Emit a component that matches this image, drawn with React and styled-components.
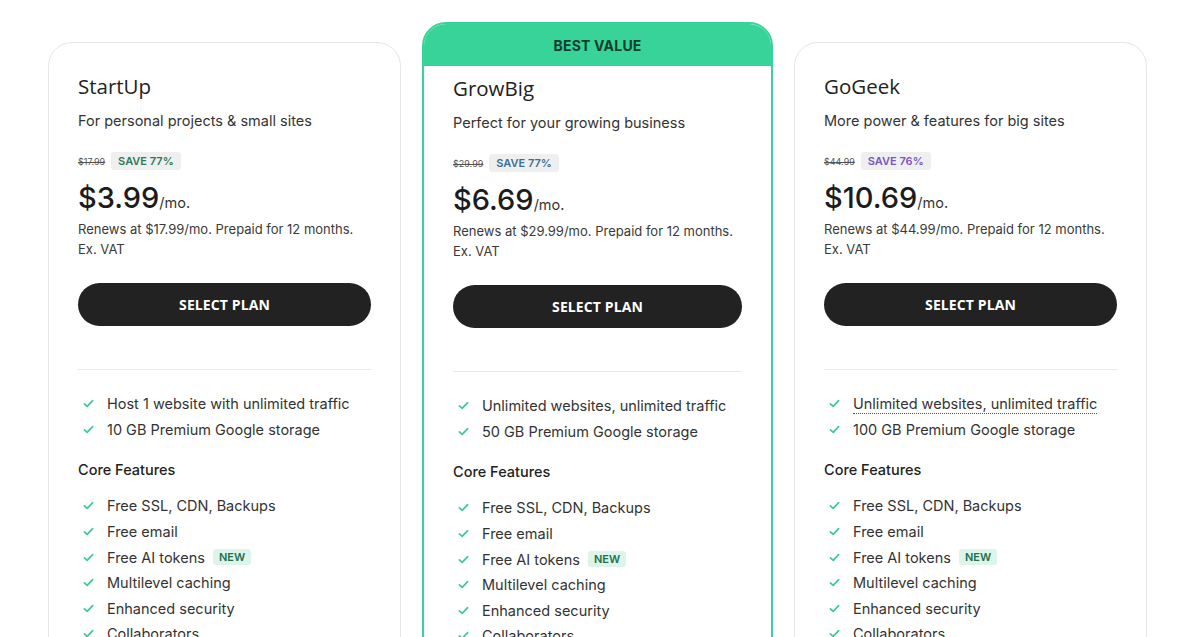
import React from "react";
import styled, { createGlobalStyle } from "styled-components";

const Global = createGlobalStyle`
  html, body { margin: 0; padding: 0; background: #fff; }
  body { font-family: Inter, "Noto Sans", sans-serif; color: #2b2b2b; -webkit-font-smoothing: antialiased; }
`;

const Page = styled.div`
  padding: 22px 0 0 48px;
  height: 615px;
  overflow: hidden;
`;

const Grid = styled.div`
  display: grid;
  grid-template-columns: 353px 351px 353px;
  column-gap: 21px;
  align-items: start;
`;

const Card = styled.div`
  margin-top: ${(p) => (p.$featured ? 0 : 20)}px;
  border: ${(p) => (p.$featured ? "2px solid #37d399" : "1px solid #e6e6e6")};
  border-radius: 24px;
  background: #fff;
  overflow: hidden;
`;

const Ribbon = styled.div`
  height: 42px;
  background: #37d399;
  display: flex;
  align-items: center;
  justify-content: center;
  font-size: 14px;
  font-weight: 700;
  color: #153d2c;
  letter-spacing: 0.2px;
`;

const Body = styled.div`
  padding: ${(p) => (p.$featured ? "8px 29px 40px" : "29px 29px 40px")};
`;

const Title = styled.h2`
  margin: 0;
  font-family: "Open Sans", Inter, sans-serif;
  font-size: 20.5px;
  line-height: 28px;
  font-weight: 500;
  color: #222;
`;

const Subtitle = styled.p`
  margin: 10px 0 0;
  font-size: 14.5px;
  line-height: 22px;
  color: #333;
`;

const SaveRow = styled.div`
  margin-top: 20px;
  display: flex;
  align-items: center;
  gap: 6px;
  height: 18px;
`;

const OldPrice = styled.span`
  font-size: 9px;
  color: #555;
  text-decoration: line-through;
`;

const SaveBadge = styled.span`
  background: #efefef;
  border-radius: 3px;
  padding: 2px 7px;
  font-size: 11px;
  line-height: 14px;
  font-weight: 600;
  color: ${(p) => p.$color};
`;

const PriceRow = styled.div`
  margin-top: 12px;
  display: flex;
  align-items: baseline;
  line-height: 32px;
`;

const Price = styled.span`
  font-size: 29px;
  font-weight: 500;
  color: #1c1c1c;
  letter-spacing: 0;
`;

const Per = styled.span`
  font-size: 14.5px;
  color: #333;
`;

const Renew = styled.p`
  margin: 0;
  font-size: 13px;
  line-height: 20px;
  color: #3a3a3a;
`;

const SelectButton = styled.button`
  margin-top: 24px;
  width: 100%;
  height: 43px;
  border: 0;
  border-radius: 22px;
  background: #222;
  color: #fff;
  font-family: "Open Sans", Inter, sans-serif;
  font-weight: 700;
  font-size: 14px;
  letter-spacing: 0.1px;
  cursor: pointer;
`;

const Divider = styled.hr`
  margin: 43px 0 0;
  border: 0;
  border-top: 1px solid #e8e8e8;
`;

const List = styled.ul`
  list-style: none;
  margin: ${(p) => p.$mt}px 0 0;
  padding: 0;
`;

const Item = styled.li`
  display: flex;
  align-items: center;
  height: 25.6px;
  font-size: 14.5px;
  color: #333;
`;

const Check = styled.svg`
  width: 11px;
  height: 11px;
  margin: 0 13px 0 5px;
  flex: none;
`;

const Label = styled.span`
  border-bottom: ${(p) => (p.$dotted ? "1.5px dotted #555" : "0")};
  line-height: ${(p) => (p.$dotted ? "19px" : "normal")};
`;

const NewTag = styled.span`
  margin-left: 8px;
  background: #ddf4ea;
  color: #23704d;
  font-size: 11px;
  font-weight: 600;
  line-height: 14px;
  padding: 1px 6px;
  border-radius: 3px;
`;

const SectionHead = styled.h3`
  margin: 17px 0 0;
  font-size: 14.5px;
  line-height: 22px;
  font-weight: 500;
  color: #222;
`;

const CheckIcon = () => (
  <Check viewBox="0 0 12 12">
    <path d="M1.5 6.3 L4.6 9.2 L10.5 2.8" fill="none" stroke="#3cc98f" strokeWidth="1.8" strokeLinecap="round" strokeLinejoin="round" />
  </Check>
);

const plans = [
  {
    name: "StartUp",
    sub: "For personal projects & small sites",
    old: "$17.99",
    save: "SAVE 77%",
    saveColor: "#2f7a55",
    price: "$3.99",
    renew: "$17.99",
    top: ["Host 1 website with unlimited traffic", "10 GB Premium Google storage"],
  },
  {
    name: "GrowBig",
    sub: "Perfect for your growing business",
    old: "$29.99",
    save: "SAVE 77%",
    saveColor: "#3d6f94",
    price: "$6.69",
    renew: "$29.99",
    featured: true,
    top: ["Unlimited websites, unlimited traffic", "50 GB Premium Google storage"],
  },
  {
    name: "GoGeek",
    sub: "More power & features for big sites",
    old: "$44.99",
    save: "SAVE 76%",
    saveColor: "#7a55c4",
    price: "$10.69",
    renew: "$44.99",
    dotted: true,
    top: ["Unlimited websites, unlimited traffic", "100 GB Premium Google storage"],
  },
];

const core = [
  { t: "Free SSL, CDN, Backups" },
  { t: "Free email" },
  { t: "Free AI tokens", isNew: true },
  { t: "Multilevel caching" },
  { t: "Enhanced security" },
  { t: "Collaborators" },
];

export default function App() {
  return (
    <>
      <Global />
      <Page>
        <Grid>
          {plans.map((p) => (
            <Card key={p.name} $featured={p.featured}>
              {p.featured && <Ribbon>BEST VALUE</Ribbon>}
              <Body $featured={p.featured}>
                <Title>{p.name}</Title>
                <Subtitle>{p.sub}</Subtitle>
                <SaveRow>
                  <OldPrice>{p.old}</OldPrice>
                  <SaveBadge $color={p.saveColor}>{p.save}</SaveBadge>
                </SaveRow>
                <PriceRow>
                  <Price>{p.price}</Price>
                  <Per>/mo.</Per>
                </PriceRow>
                <Renew>
                  Renews at {p.renew}/mo. Prepaid for 12 months.
                  <br />
                  Ex. VAT
                </Renew>
                <SelectButton>SELECT PLAN</SelectButton>
                <Divider />
                <List $mt={21}>
                  {p.top.map((t, i) => (
                    <Item key={t}>
                      <CheckIcon />
                      <Label $dotted={p.dotted && i === 0}>{t}</Label>
                    </Item>
                  ))}
                </List>
                <SectionHead>Core Features</SectionHead>
                <List $mt={12}>
                  {core.map((c) => (
                    <Item key={c.t}>
                      <CheckIcon />
                      <Label>{c.t}</Label>
                      {c.isNew && <NewTag>NEW</NewTag>}
                    </Item>
                  ))}
                </List>
              </Body>
            </Card>
          ))}
        </Grid>
      </Page>
    </>
  );
}
